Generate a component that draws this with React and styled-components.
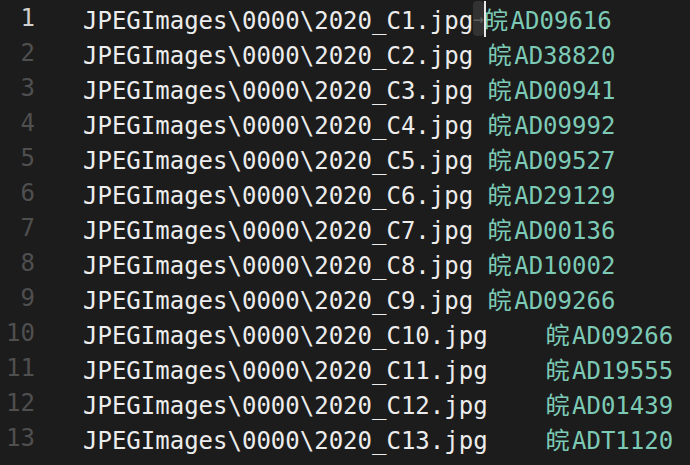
import React from "react";
import styled, { createGlobalStyle } from "styled-components";

const GlobalStyle = createGlobalStyle`
  html, body {
    margin: 0;
    padding: 0;
    background: #1c1c1c;
    overflow: hidden;
  }
`;

const Editor = styled.div`
  width: 690px;
  height: 465px;
  background: #1c1c1c;
  padding-top: 1px;
  box-sizing: border-box;
  font-family: "DejaVu Sans Mono", "Liberation Mono", monospace;
  font-size: 24px;
  overflow: hidden;
`;

const Line = styled.div`
  display: grid;
  grid-template-columns: 35px 1fr;
  column-gap: 48px;
  height: 35px;
  line-height: 35px;
`;

const LineNo = styled.div`
  text-align: right;
  color: ${(p) => (p.$active ? "#d0d0d0" : "#4f4f4f")};
`;

const Code = styled.div`
  white-space: pre;
  tab-size: 4;
  color: #ececec;
`;

const TabMark = styled.span`
  display: inline-block;
  vertical-align: top;
  width: 1ch;
  height: 35px;
  background: #323232;
  border-radius: 4px;
  color: #5e5e5e;
  text-align: center;
  font-size: 18px;
`;

const Cursor = styled.span`
  display: inline-block;
  vertical-align: top;
  width: 2px;
  height: 36px;
  margin-right: -2px;
  background: #e8e8e8;
  position: relative;
  z-index: 1;
`;

const Plate = styled.span`
  color: #7ccab6;
`;

const Han = styled.span`
  display: inline-block;
  width: 2ch;
  font-family: "Noto Sans CJK SC", sans-serif;
`;

const rows = [
  ["C1", "AD09616"],
  ["C2", "AD38820"],
  ["C3", "AD00941"],
  ["C4", "AD09992"],
  ["C5", "AD09527"],
  ["C6", "AD29129"],
  ["C7", "AD00136"],
  ["C8", "AD10002"],
  ["C9", "AD09266"],
  ["C10", "AD09266"],
  ["C11", "AD19555"],
  ["C12", "AD01439"],
  ["C13", "ADT1120"],
];

export default function App() {
  return (
    <>
      <GlobalStyle />
      <Editor>
        {rows.map(([name, plate], i) => {
          const active = i === 0;
          return (
            <Line key={name}>
              <LineNo $active={active}>{i + 1}</LineNo>
              <Code>
                {`JPEGImages\\0000\\2020_${name}.jpg`}
                {active ? (
                  <>
                    <TabMark>→</TabMark>
                    <Cursor />
                  </>
                ) : (
                  "\t"
                )}
                <Plate>
                  <Han>皖</Han>
                  {plate}
                </Plate>
              </Code>
            </Line>
          );
        })}
      </Editor>
    </>
  );
}
